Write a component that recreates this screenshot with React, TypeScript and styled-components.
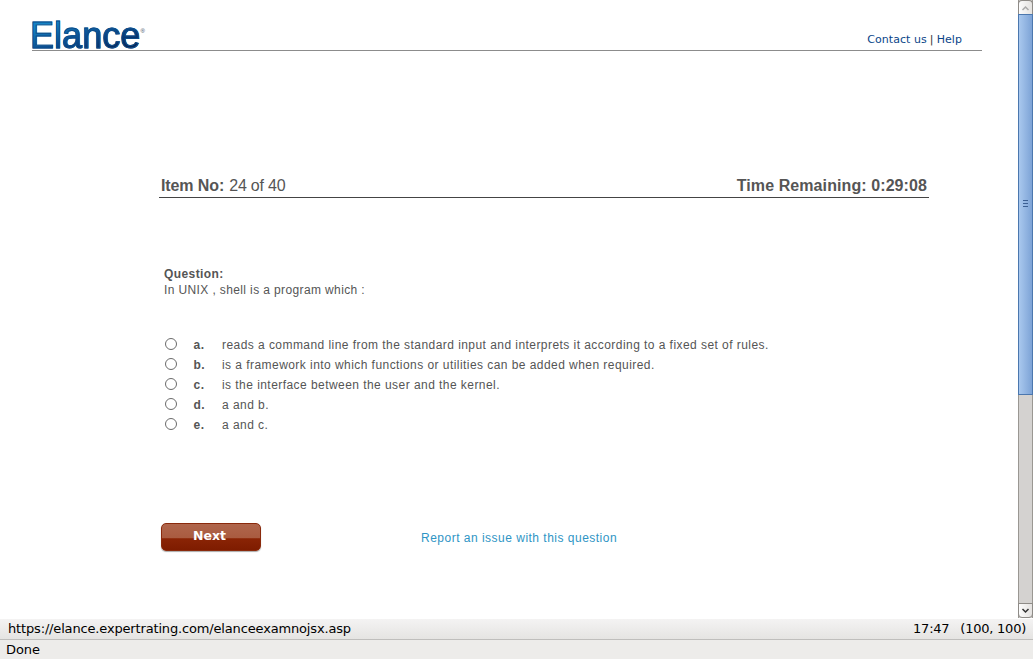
import React from 'react';
import styled, { createGlobalStyle } from 'styled-components';

const GlobalStyle = createGlobalStyle`
  * { box-sizing: border-box; }
  html, body { margin: 0; padding: 0; overflow: hidden; background: #fff; }
`;

const Window = styled.div`
  width: 1033px;
  height: 659px;
  display: flex;
  flex-direction: column;
  overflow: hidden;
  background: #fff;
  font-family: 'DejaVu Sans', sans-serif;
`;

const Viewport = styled.div`
  height: 619px;
  display: flex;
`;

const Page = styled.main`
  width: 1018px;
  color: #555;
  font-family: 'Liberation Sans', Arial, sans-serif;
`;

const Header = styled.header`
  width: 950px;
  height: 51px;
  margin-left: 32px;
  display: flex;
  justify-content: space-between;
  border-bottom: 1px solid #8c8c8c;
`;

const Logo = styled.div`
  display: flex;
  align-items: flex-start;
  padding-top: 16px;
  margin-left: -2px;
`;

const LogoWord = styled.span`
  font-size: 36px;
  line-height: 40px;
  height: 34px;
  letter-spacing: 0.05px;
  color: transparent;
  background: linear-gradient(165deg, #1583c4 20%, #0a4f92 55%, #06285c 88%);
  background-clip: text;
  -webkit-background-clip: text;
  -webkit-text-stroke: 0.9px #0b4c8a;
`;

const Registered = styled.span`
  padding-top: 10px;
  font-size: 6px;
  line-height: 10px;
  color: #345;
`;

const HeaderLinks = styled.nav`
  display: flex;
  gap: 3px;
  padding: 33px 20px 0 0;
  font: 11px/14px 'DejaVu Sans', sans-serif;
  letter-spacing: 0.07px;
  color: #333;
`;

const HeaderLink = styled.a`
  color: #0a4588;
`;

const Exam = styled.section`
  width: 770px;
  margin: 123px 0 0 159px;
`;

const StatusRow = styled.div`
  height: 24px;
  display: flex;
  justify-content: space-between;
  padding: 3px 2px 0;
  border-bottom: 1px solid #444;
  font-size: 16px;
  line-height: 18px;
`;

const ItemNumber = styled.div`
  display: flex;
  gap: 5px;
`;

const Strong = styled.b<{ $spacing?: number }>`
  letter-spacing: ${(p) => p.$spacing ?? 0}px;
`;

const Text = styled.span<{ $spacing?: number }>`
  letter-spacing: ${(p) => p.$spacing ?? 0}px;
  white-space: nowrap;
`;

const Question = styled.div`
  display: flex;
  flex-direction: column;
  margin: 68px 0 0 5px;
  font-size: 12px;
  line-height: 16px;
`;

const Options = styled.div`
  margin: 37px 0 0 6px;
  font-size: 12px;
`;

const Option = styled.label`
  display: grid;
  grid-template-columns: 28.5px 28.5px 1fr;
  align-items: center;
  height: 20px;
`;

const Radio = styled.input.attrs({ type: 'radio', name: 'answer' })`
  appearance: none;
  width: 12px;
  height: 12px;
  margin: 0 0 2px;
  border: 1px solid #6b6b6b;
  border-radius: 50%;
  background: #fff;
`;

const Actions = styled.div`
  display: flex;
  align-items: flex-start;
  margin: 88px 0 0 2px;
`;

const NextButton = styled.button`
  width: 100px;
  height: 28px;
  margin: 0 160px 0 0;
  padding: 0 3px 2px 0;
  border: 1px solid #8a2a0c;
  border-radius: 5px;
  background: linear-gradient(#b0664c 0, #a95b40 55%, #8a2405 56%, #7e1c00 100%);
  box-shadow: 0 1px 1px #aaa;
  color: #fff;
  font: bold 12.5px/16px 'DejaVu Sans', sans-serif;
`;

const ReportLink = styled.a`
  padding-top: 7px;
  font-size: 12px;
  line-height: 16px;
  color: #2f95c5;
`;

const Scrollbar = styled.aside`
  width: 15px;
  height: 618px;
  display: flex;
  flex-direction: column;
  border: solid #9a9792;
  border-width: 0 1px;
  background: #d4d2d0;
`;

const ScrollButton = styled.div<{ $end?: boolean }>`
  height: ${(p) => (p.$end ? 15 : 14)}px;
  display: flex;
  align-items: center;
  justify-content: center;
  margin: 0 -1px;
  border: 1px solid #8e8b87;
  border-width: ${(p) => (p.$end ? '1px' : '1px 1px 0')};
  border-radius: ${(p) => (p.$end ? '0 0 4px 4px' : '4px 4px 0 0')};
  background: linear-gradient(90deg, #fcfcfc, #e4e2e0);
`;

const Thumb = styled.div`
  height: 381px;
  display: flex;
  flex-direction: column;
  align-items: center;
  justify-content: center;
  gap: 2px;
  margin: 0 -1px auto;
  padding-bottom: 2px;
  border: 1px solid #4b77ae;
  background: linear-gradient(90deg, #a9c8ee, #7da3d6);
`;

const Grip = styled.i`
  width: 5px;
  height: 1px;
  background: #3b5f93;
`;

const LocationBar = styled.footer`
  height: 21px;
  display: flex;
  justify-content: space-between;
  padding: 2px 7px 0 8px;
  border-bottom: 1px solid #bfbebc;
  background: linear-gradient(#f4f3f3, #e5e4e2);
  font-size: 13px;
  line-height: 16px;
  letter-spacing: -0.16px;
  color: #000;
`;

const Clock = styled.div`
  display: flex;
  gap: 11px;
  letter-spacing: -0.24px;
`;

const DoneBar = styled.footer`
  height: 19px;
  padding: 1px 6px;
  background: #edecea;
  font-size: 13px;
  line-height: 18px;
  letter-spacing: -0.1px;
  color: #000;
`;

const Chevron = ({ down, color }: { down?: boolean; color: string }) => (
  <svg width="9" height="6" viewBox="0 0 9 6" fill="none" stroke={color} strokeWidth="1.5">
    <path d={down ? 'M1.5 1L4.5 4L7.5 1' : 'M1.5 5L4.5 2L7.5 5'} />
  </svg>
);

const options = [
  ['a.', 'reads a command line from the standard input and interprets it according to a fixed set of rules.'],
  ['b.', 'is a framework into which functions or utilities can be added when required.'],
  ['c.', 'is the interface between the user and the kernel.'],
  ['d.', 'a and b.'],
  ['e.', 'a and c.'],
];

export default function App() {
  return (
    <Window>
      <GlobalStyle />
      <Viewport>
        <Page>
          <Header>
            <Logo>
              <LogoWord>Elance</LogoWord>
              <Registered>®</Registered>
            </Logo>
            <HeaderLinks>
              <HeaderLink>Contact us</HeaderLink>
              <span>|</span>
              <HeaderLink>Help</HeaderLink>
            </HeaderLinks>
          </Header>
          <Exam>
            <StatusRow>
              <ItemNumber>
                <Strong $spacing={-0.1}>Item No:</Strong>
                <Text $spacing={-0.2}>24 of 40</Text>
              </ItemNumber>
              <Strong $spacing={0.09}>Time Remaining: 0:29:08</Strong>
            </StatusRow>
            <Question>
              <Strong $spacing={0.42}>Question:</Strong>
              <Text $spacing={0.38}>In UNIX , shell is a program which :</Text>
            </Question>
            <Options>
              {options.map(([letter, text]) => (
                <Option key={letter}>
                  <Radio />
                  <Strong $spacing={0.5}>{letter}</Strong>
                  <Text $spacing={0.445}>{text}</Text>
                </Option>
              ))}
            </Options>
            <Actions>
              <NextButton>Next</NextButton>
              <ReportLink>
                <Text $spacing={0.49}>Report an issue with this question</Text>
              </ReportLink>
            </Actions>
          </Exam>
        </Page>
        <Scrollbar>
          <ScrollButton>
            <Chevron color="#aaa" />
          </ScrollButton>
          <Thumb>
            <Grip />
            <Grip />
            <Grip />
          </Thumb>
          <ScrollButton $end>
            <Chevron down color="#333" />
          </ScrollButton>
        </Scrollbar>
      </Viewport>
      <LocationBar>
        <span>https://elance.expertrating.com/elanceexamnojsx.asp</span>
        <Clock>
          <span>17:47</span>
          <span>(100, 100)</span>
        </Clock>
      </LocationBar>
      <DoneBar>Done</DoneBar>
    </Window>
  );
}
